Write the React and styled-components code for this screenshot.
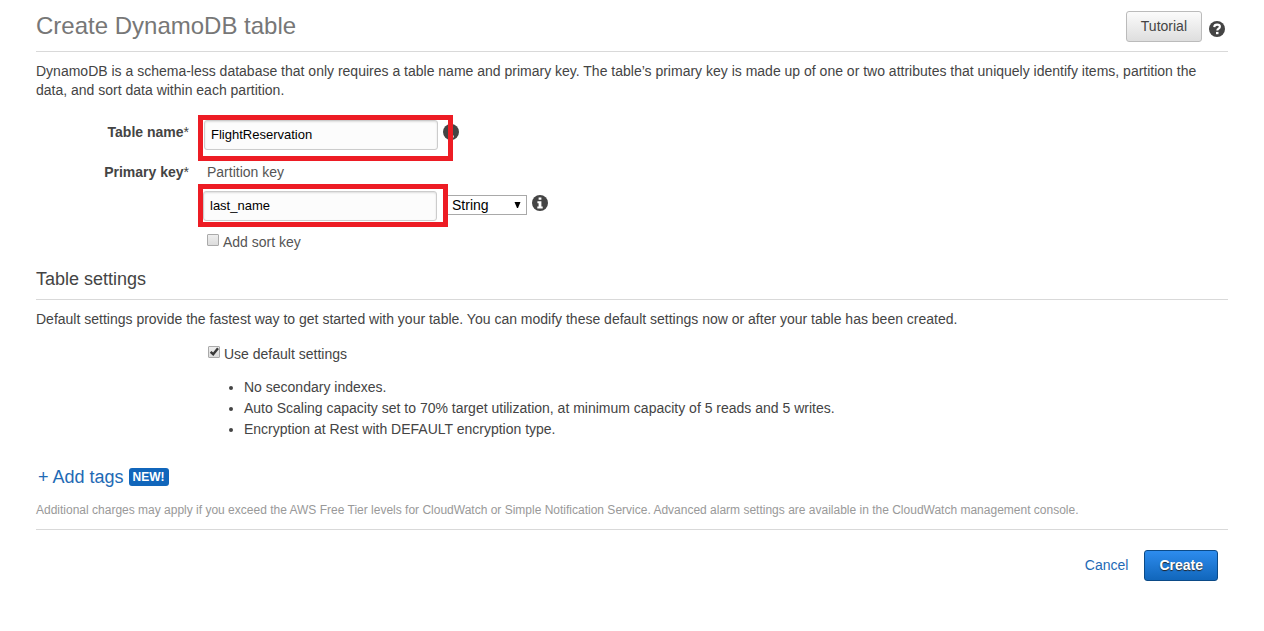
import React from "react";
import styled, { createGlobalStyle, css } from "styled-components";

const GlobalStyle = createGlobalStyle`
  *, *::before, *::after { box-sizing: border-box; }
  body {
    margin: 0;
    background: #fff;
    color: #444;
    font: 14px/19px "Liberation Sans", Arial, sans-serif;
  }
  button, input, select { font-family: inherit; margin: 0; }
`;

const Page = styled.main`
  padding: 0 36px 50px;
`;

const Header = styled.header`
  display: flex;
  justify-content: space-between;
  align-items: center;
  height: 52px;
  border-bottom: 1px solid #d9d9d9;
`;

const Title = styled.h1`
  margin: 0;
  font-size: 24px;
  line-height: 28px;
  font-weight: normal;
  color: #777;
`;

const HeaderActions = styled.div`
  display: flex;
  align-items: center;
  gap: 7px;
  padding: 2px 3px 0 0;
`;

const Button = styled.button`
  height: 31px;
  padding: 0 14px;
  border-radius: 3px;
  font-size: 14px;
  line-height: 19px;
  cursor: pointer;
  ${({ $primary }) =>
    $primary
      ? css`
          border: 1px solid #0b4a87;
          background: linear-gradient(#2d8cee, #1166bb);
          color: #fff;
          font-weight: bold;
          text-shadow: 0 1px 1px #222;
        `
      : css`
          border: 1px solid #bbb;
          background: linear-gradient(#fbfbfb, #dedede);
          color: #444;
        `}
`;

const IconButton = styled.button`
  display: flex;
  width: 16px;
  height: 16px;
  padding: 0;
  border: 0;
  background: none;
  color: #444;
  cursor: pointer;
  svg { width: 16px; height: 16px; }
`;

const HelpIcon = styled(IconButton)`
  margin-top: 4px;
`;

const Paragraph = styled.p`
  margin: 10px 0 0;
`;

const Form = styled.form`
  margin: 0;
`;

const FieldGrid = styled.div`
  display: grid;
  grid-template-columns: 153px 1fr;
  column-gap: 9px;
  margin-top: 15px;
`;

const FieldLabel = styled.label`
  padding-top: ${({ $top }) => $top}px;
  font-weight: bold;
  text-align: right;
  span { font-weight: normal; }
`;

const FieldRow = styled.div`
  position: relative;
  display: flex;
  align-items: flex-start;
  height: ${({ $height }) => $height}px;
  padding: ${({ $padding }) => $padding};
`;

const Highlight = styled.div`
  position: absolute;
  inset: 0 auto 0 0;
  width: ${({ $width }) => $width}px;
  border: 5px solid #ed1c24;
  pointer-events: none;
`;

const TextInput = styled.input`
  width: 234px;
  height: 30px;
  padding: 0 6px 2px;
  border: 1px solid #ccc;
  border-radius: 3px;
  background: #fcfcfc;
  box-shadow: inset 0 1px 2px #ddd;
  color: #000;
  font-size: 13px;
`;

const InfoIcon = styled(IconButton)`
  margin: 4px 0 0 5px;
`;

const SelectBox = styled.div`
  position: relative;
  margin: 4px 0 0 9px;
  svg {
    position: absolute;
    right: 6px;
    top: 7px;
    pointer-events: none;
  }
`;

const Select = styled.select`
  display: block;
  appearance: none;
  width: 81px;
  height: 20px;
  padding: 0 20px 0 5px;
  border: 1px solid #a9a9a9;
  border-radius: 0;
  background: #fff;
  color: #000;
  font-size: 14px;
`;

const FieldNote = styled.div`
  padding: 2px 0 2px 9px;
  color: #555;
`;

const CheckLabel = styled.label`
  display: flex;
  gap: 4px;
  width: max-content;
  color: ${({ $muted }) => ($muted ? "#555" : "#444")};
`;

const CheckBox = styled.span`
  position: relative;
  display: flex;
  margin-top: 1px;
  height: 12px;
  svg { position: absolute; left: 1px; top: 0; pointer-events: none; }
`;

const CheckInput = styled.input`
  appearance: none;
  width: 12px;
  height: 12px;
  border: 1px solid #aaa;
  border-radius: 1px;
  background: linear-gradient(#eee, #dcdcdc);
`;

const SortKeyRow = styled.div`
  grid-column: 2;
  padding: 6px 0 0 9px;
`;

const SectionTitle = styled.h2`
  margin: 16px 0 0;
  padding-bottom: 9px;
  border-bottom: 1px solid #d9d9d9;
  font-size: 18px;
  line-height: 22px;
  font-weight: normal;
`;

const Defaults = styled.div`
  margin: 16px 0 0 172px;
`;

const DefaultList = styled.ul`
  margin: 13px 0 0;
  padding-left: 36px;
  line-height: 21px;
`;

const TagsRow = styled.div`
  display: flex;
  align-items: center;
  gap: 5px;
  margin-top: 26px;
  padding-left: 2px;
`;

const Link = styled.a`
  color: #1e6ab5;
  font-size: ${({ $large }) => ($large ? 18 : 14)}px;
  line-height: ${({ $large }) => ($large ? 22 : 19)}px;
  text-decoration: none;
`;

const Badge = styled.span`
  padding: 0 4px;
  border-radius: 3px;
  background: #1166bb;
  color: #fff;
  font-size: 12px;
  line-height: 18px;
  font-weight: bold;
`;

const FinePrint = styled.p`
  margin: 14px 0 0;
  padding-bottom: 10px;
  border-bottom: 1px solid #d9d9d9;
  color: #999;
  font-size: 12px;
  line-height: 17px;
`;

const Footer = styled.footer`
  display: flex;
  justify-content: flex-end;
  align-items: center;
  gap: 16px;
  padding: 20px 10px 0 0;
`;

function Checkbox({ checked, muted, children }) {
  const [on, setOn] = React.useState(checked);
  return (
    <CheckLabel $muted={muted}>
      <CheckBox>
        <CheckInput type="checkbox" checked={on} onChange={() => setOn(!on)} />
        {on && (
          <svg width="11" height="11" viewBox="0 0 11 11" aria-hidden="true">
            <path d="M1.6 5.8 4.2 8.2 9 2.3" fill="none" stroke="#3a3a3a" strokeWidth="2.4" />
          </svg>
        )}
      </CheckBox>
      {children}
    </CheckLabel>
  );
}

function Info({ label }) {
  return (
    <InfoIcon type="button" aria-label={label}>
      <svg viewBox="0 0 16 16" aria-hidden="true">
        <circle cx="8" cy="8" r="8" fill="currentColor" />
        <path d="M6.6 2.5h2.8v2.3H6.6zM5.4 6.2h4v5.2h1.3v2H5.3v-2h1.3V8.2H5.4z" fill="#fff" />
      </svg>
    </InfoIcon>
  );
}

export default function App() {
  return (
    <>
      <GlobalStyle />
      <Page>
        <Header>
          <Title>Create DynamoDB table</Title>
          <HeaderActions>
            <Button type="button">Tutorial</Button>
            <HelpIcon type="button" aria-label="Help">
              <svg viewBox="0 0 16 16" aria-hidden="true">
                <circle cx="8" cy="8" r="8" fill="currentColor" />
                <path
                  d="M5.2 6.1C5.3 4.4 6.5 3.6 8.1 3.6c1.7 0 2.8.9 2.8 2.2 0 1.9-2.6 1.9-2.6 3.8"
                  fill="none"
                  stroke="#fff"
                  strokeWidth="2.1"
                />
                <path d="M7 10.9h2.5v2.3H7z" fill="#fff" />
              </svg>
            </HelpIcon>
          </HeaderActions>
        </Header>

        <Paragraph>
          DynamoDB is a schema-less database that only requires a table name and primary key. The
          table’s primary key is made up of one or two attributes that uniquely identify items,
          partition the data, and sort data within each partition.
        </Paragraph>

        <Form onSubmit={(e) => e.preventDefault()}>
          <FieldGrid>
            <FieldLabel htmlFor="table-name" $top={8}>
              Table name<span>*</span>
            </FieldLabel>
            <FieldRow $height={46} $padding="5px 0 0 6px">
              <TextInput id="table-name" defaultValue="FlightReservation" />
              <Info label="About the table name" />
              <Highlight $width={255} />
            </FieldRow>

            <FieldLabel htmlFor="partition-key" $top={2}>
              Primary key<span>*</span>
            </FieldLabel>
            <div>
              <FieldNote>Partition key</FieldNote>
              <FieldRow $height={43} $padding="7px 0 0 5px">
                <TextInput id="partition-key" defaultValue="last_name" />
                <SelectBox>
                  <Select aria-label="Partition key type" defaultValue="String">
                    <option>String</option>
                    <option>Binary</option>
                    <option>Number</option>
                  </Select>
                  <svg width="7" height="6" viewBox="0 0 7 6" aria-hidden="true">
                    <path d="M.5 0h6L4 6H3z" fill="#000" />
                  </svg>
                </SelectBox>
                <Info label="About the partition key" />
                <Highlight $width={250} />
              </FieldRow>
            </div>

            <SortKeyRow>
              <Checkbox checked={false} muted>
                Add sort key
              </Checkbox>
            </SortKeyRow>
          </FieldGrid>

          <SectionTitle>Table settings</SectionTitle>
          <Paragraph>
            Default settings provide the fastest way to get started with your table. You can modify
            these default settings now or after your table has been created.
          </Paragraph>
          <Defaults>
            <Checkbox checked>Use default settings</Checkbox>
            <DefaultList>
              <li>No secondary indexes.</li>
              <li>
                Auto Scaling capacity set to 70% target utilization, at minimum capacity of 5 reads
                and 5 writes.
              </li>
              <li>Encryption at Rest with DEFAULT encryption type.</li>
            </DefaultList>
          </Defaults>

          <TagsRow>
            <Link href="#tags" $large>
              + Add tags
            </Link>
            <Badge>NEW!</Badge>
          </TagsRow>
          <FinePrint>
            Additional charges may apply if you exceed the AWS Free Tier levels for CloudWatch or
            Simple Notification Service. Advanced alarm settings are available in the CloudWatch
            management console.
          </FinePrint>

          <Footer>
            <Link href="#cancel">Cancel</Link>
            <Button type="submit" $primary>
              Create
            </Button>
          </Footer>
        </Form>
      </Page>
    </>
  );
}
